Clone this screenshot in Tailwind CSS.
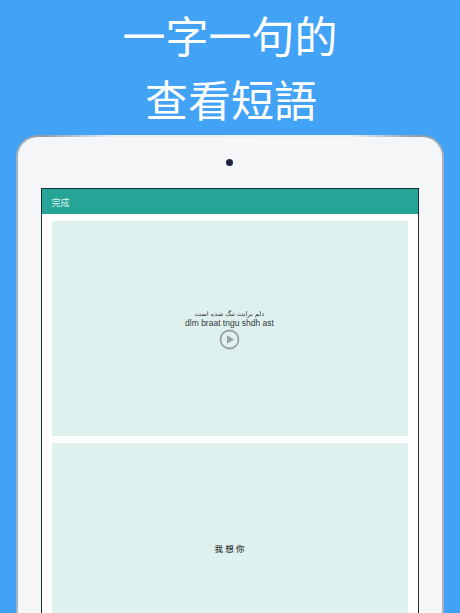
<!DOCTYPE html>
<html lang="zh-Hant">
<head>
  <meta charset="UTF-8" />
  <meta name="viewport" content="width=device-width, initial-scale=1.0"/>
  <title>一字一句的查看短語</title>
  <script src="https://cdn.jsdelivr.net/npm/@tailwindcss/browser@4"></script>
</head>
<body class="bg-[#42a2f6]">
  <div class="h-[613px] w-[460px] overflow-hidden flex flex-col items-center font-['Liberation_Sans','Noto_Sans_CJK_TC',sans-serif]">
    <h1 class="shrink-0 pt-[2px] h-[135px] text-center text-[43px] leading-[64px] font-normal text-white font-['Noto_Sans_CJK_TC',sans-serif]">
      <div>一字一句的</div>
      <div class="ml-[2px]">查看短語</div>
    </h1>

    <!-- tablet, the outer gradient is the metal edge -->
    <div class="w-[428px] flex-1 ml-[-1px] rounded-t-[22px] pt-[2px] px-[2px] bg-[linear-gradient(to_right,#aab4be,#8d99a5_6%,#e8edf2_22%,#eef2f6_78%,#8d99a5_94%,#aab4be)] flex flex-col">
      <div class="flex-1 rounded-t-[20px] bg-[#f4f6f8] px-[22px] flex flex-col items-center">
        <div class="mt-[22px] mb-[22px] w-[7px] h-[7px] rounded-full bg-[#1c2440]"></div>

        <div class="w-[378px] flex-1 bg-white border-x border-t border-[#1d2b33]">
          <div class="h-[25px] bg-[#26a596] flex items-center px-[10px] pt-[5px] text-[9px] text-[#d4eee9]">完成</div>

          <div class="pl-[10px] pr-[10px] pt-[7px] flex flex-col gap-[7px]">
            <div class="h-[215px] bg-[#dff1ee] flex flex-col items-center justify-center pt-[1px] text-[#33393a]">
              <div dir="rtl" class="text-[6.6px] leading-[10px] font-['DejaVu_Sans',sans-serif]">دلم برایت تنگ شده است</div>
              <div class="text-[8.5px] leading-[9px]">dlm braat tngu shdh ast</div>
              <svg class="mt-[1px] ml-[-1px]" width="21" height="21" viewBox="0 0 21 21" fill="none">
                <circle cx="10.5" cy="10.5" r="9" stroke="#9aa3a1" stroke-width="1.8"/>
                <path d="M8 6.2 15 10.5 8 14.8Z" fill="#9aa3a1"/>
              </svg>
            </div>
            <div class="h-[240px] bg-[#dff1ee] flex justify-center pt-[100px]">
              <div class="text-[8.5px] leading-[12px] text-[#33393a] whitespace-pre font-medium">我 想 你</div>
            </div>
          </div>
        </div>
      </div>
    </div>
  </div>
</body>
</html>
